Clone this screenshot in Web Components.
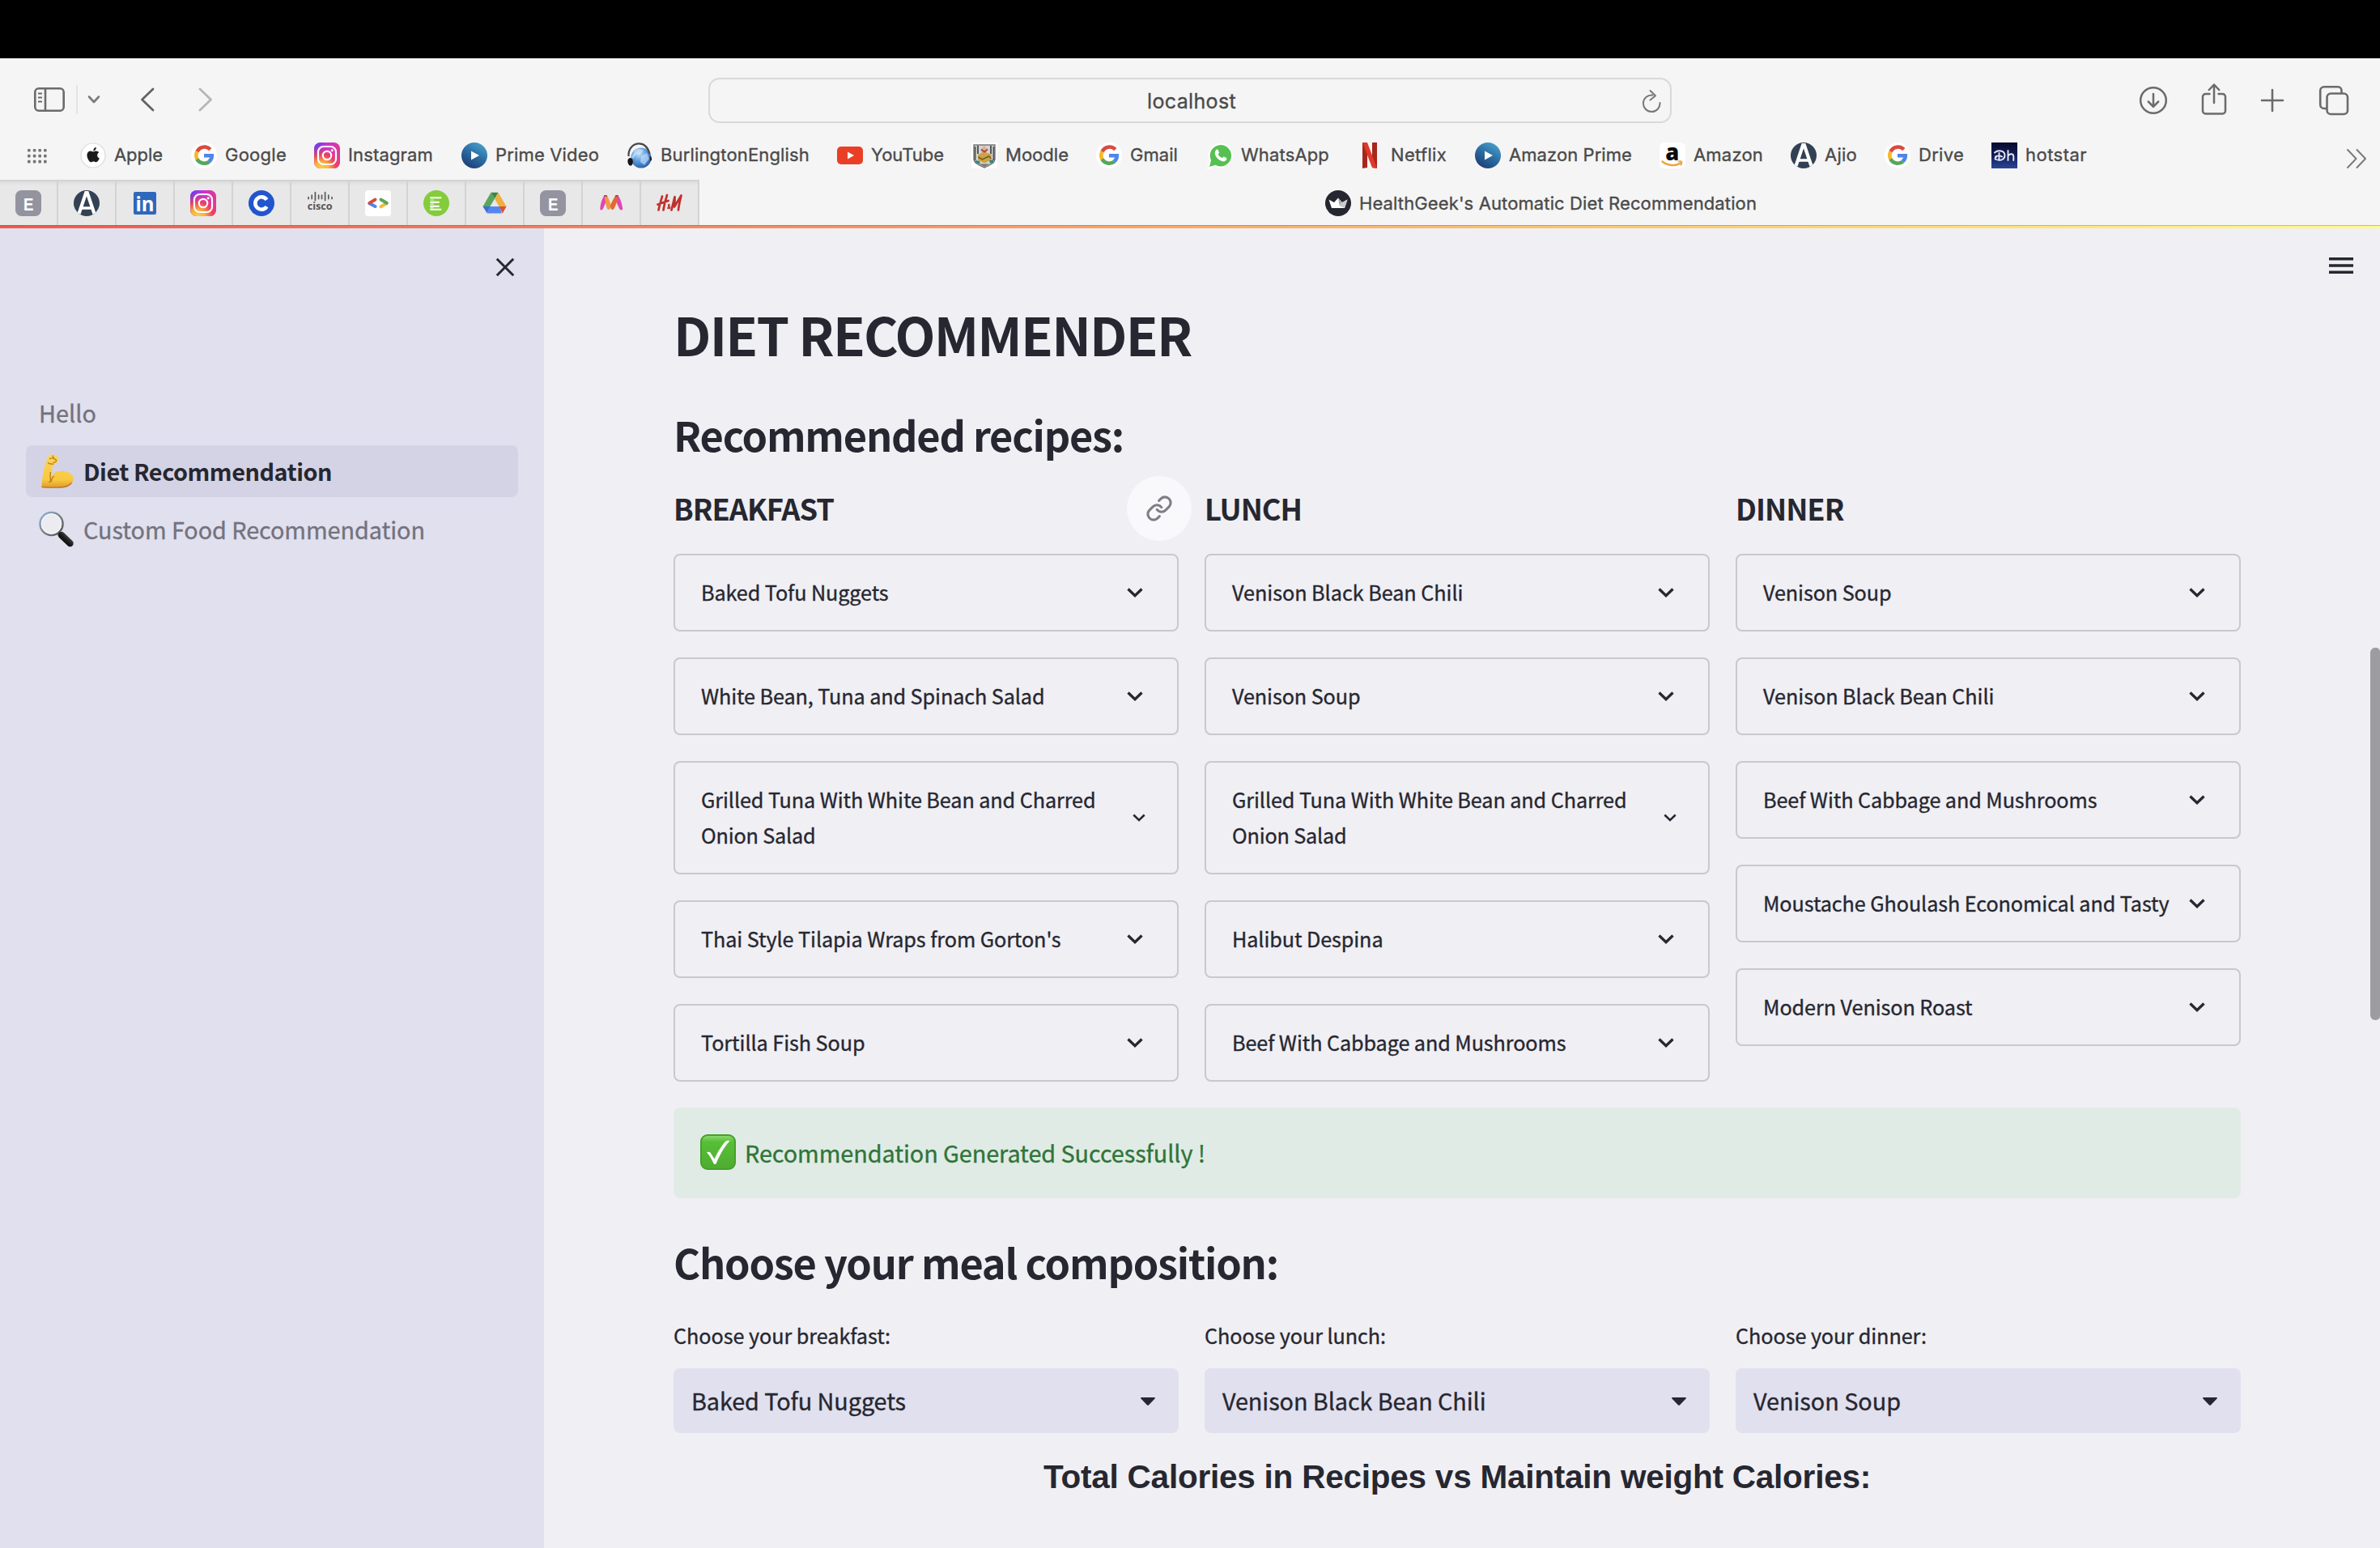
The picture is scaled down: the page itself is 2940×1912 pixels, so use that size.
<!DOCTYPE html>
<html lang="en">
<head>
<meta charset="utf-8">
<title>HealthGeek's Automatic Diet Recommendation</title>
<style>
html,body{margin:0;height:100%;overflow:hidden;background:#f0eff4}
</style>
</head>
<body>
<app-window></app-window>
<script>
const define = (name, css, html, ready) => customElements.define(name, class extends HTMLElement {
  constructor() {
    super();
    this.attachShadow({ mode: 'open' });
  }
  connectedCallback() {
    if (this.done) return;
    this.done = true;
    this.shadowRoot.innerHTML = `<style>*{box-sizing:border-box}${css}</style>` + (typeof html === 'function' ? html(this) : html);
    if (ready) ready(this);
  }
});

const googleG = '<circle cx="16" cy="16" r="16" fill="#fff"/><g fill="none" stroke-width="4.600"><path d="M23.800 8.600A10 10 0 0 0 7.500 11.400" stroke="#db4a3f"/><path d="M7.600 11.200a10 10 0 0 0 0 9.600" stroke="#f4b928"/><path d="M7.400 20.600A10 10 0 0 0 22.600 23.400" stroke="#57a65b"/><path d="M22.400 23.600A9.800 9.800 0 0 0 25.800 16.200H16" stroke="#4f86ec"/></g>';
const instagram = '<defs><linearGradient id="a" x1="0" y1="0" x2="1" y2="0"><stop offset="0" stop-color="#5b3df5"/><stop offset=".5" stop-color="#c435d6"/><stop offset="1" stop-color="#e4378f"/></linearGradient><radialGradient id="b" cx=".28" cy="1.05" r="1"><stop offset="0" stop-color="#fbd44a"/><stop offset=".3" stop-color="#f9b13e"/><stop offset=".6" stop-color="#ef4155" stop-opacity=".9"/><stop offset="1" stop-color="#d93ab0" stop-opacity="0"/></radialGradient></defs><rect width="32" height="32" rx="7.500" fill="url(#a)"/><rect width="32" height="32" rx="7.500" fill="url(#b)"/><g fill="none" stroke="#fff" stroke-width="2.200"><rect x="5" y="5" width="22" height="22" rx="6.500"/><circle cx="16" cy="16" r="5.200"/></g><circle cx="22.200" cy="9.800" r="1.500" fill="#fff"/>';
const prime = '<defs><linearGradient id="a" x1=".8" y1="0" x2=".2" y2="1"><stop offset="0" stop-color="#4aa3cf"/><stop offset=".5" stop-color="#2b6ba0"/><stop offset="1" stop-color="#1d3a72"/></linearGradient></defs><circle cx="16" cy="16" r="16" fill="url(#a)"/><path d="M12 10.400v11.200L22 16z" fill="#fff"/>';
const ajio = '<defs><clipPath id="c"><circle cx="16" cy="16" r="16"/></clipPath></defs><circle cx="16" cy="16" r="16" fill="#334155"/><g clip-path="url(#c)" fill="none" stroke="#fff"><path d="M6.500 29 15.200 3h1.600L25.500 29" stroke-width="4.200"/><path d="M8 22h16" stroke-width="3.400"/></g>';
const letterE = '<rect width="32" height="32" rx="7.500" fill="#9494a0"/><text x="16.300" y="24.600" text-anchor="middle" font-family="Liberation Sans" font-weight="700" font-size="22" textLength="12.500" lengthAdjust="spacingAndGlyphs" fill="#fff">E</text>';

const ICONS = {
  sidebar: [38,30,'<g fill="none" stroke="#6b6b6b" stroke-width="2.600"><rect x="1.300" y="1.300" width="35.400" height="27.400" rx="4.500"/><path d="M14 1v28"/><path d="M5 7.500h5M5 12.500h5M5 17.500h5" stroke-width="2"/></g>'],
  caret: [16,12,'<path d="M2 2.500 8 9l6-6.500" fill="none" stroke="#7b7b7b" stroke-width="2.600" stroke-linecap="round" stroke-linejoin="round"/>'],
  back: [18,30,'<path d="M16 2 2.500 15 16 28" fill="none" stroke="#636363" stroke-width="2.800" stroke-linecap="round" stroke-linejoin="round"/>'],
  forward: [18,30,'<path d="M2 2l13.500 13L2 28" fill="none" stroke="#b6b6b6" stroke-width="2.800" stroke-linecap="round" stroke-linejoin="round"/>'],
  reload: [26,30,'<g fill="none" stroke="#777" stroke-width="2" stroke-linecap="round" stroke-linejoin="round"><path d="M14.500 7.500a10.300 10.300 0 1 0 9 9.500"/><path d="M11.500 2l6.500 6.200-6.500 5.300"/></g>'],
  download: [36,36,'<g fill="none" stroke="#6b6b6b" stroke-width="2.500" stroke-linecap="round" stroke-linejoin="round"><circle cx="18" cy="18" r="15.800"/><path d="M18 10v15.500M11.800 19.500 18 25.800l6.200-6.300"/></g>'],
  share: [32,40,'<g fill="none" stroke="#6b6b6b" stroke-width="2.500" stroke-linecap="round" stroke-linejoin="round"><path d="M10.500 14H5.500a3.500 3.500 0 0 0-3.500 3.500V35a3.500 3.500 0 0 0 3.500 3.500h21A3.500 3.500 0 0 0 30 35V17.500a3.500 3.500 0 0 0-3.500-3.500h-5"/><path d="M16 25V3M9.800 9 16 2.500 22.200 9"/></g>'],
  plus: [30,30,'<path d="M15 2v26M2 15h26" stroke="#6b6b6b" stroke-width="2.600" stroke-linecap="round"/>'],
  windows: [38,38,'<g fill="none" stroke="#6b6b6b" stroke-width="2.600"><path d="M10.500 29H7a4.800 4.800 0 0 1-4.800-4.800V7A4.800 4.800 0 0 1 7 2.200h17A4.800 4.800 0 0 1 28.500 7v3.500"/><rect x="10.500" y="10.500" width="25.500" height="25.500" rx="4.800"/></g>'],
  more: [28,26,'<g fill="none" stroke="#7b7b7b" stroke-width="2" stroke-linecap="round" stroke-linejoin="round"><path d="M3 2l10.500 11L3 24M14.500 2 25 13 14.500 24"/></g>'],
  grid: [24,18,'<g fill="#757575">' + [0,6.8,13.4,20].map(x => [0,6.8,13.8].map(y => `<rect x="${x}" y="${y}" width="3.600" height="3.600" rx="1"/>`).join('')).join('') + '</g>'],
  apple: [32,32,'<circle cx="16" cy="16" r="15" fill="#fff" stroke="#dadada" stroke-width="1.200"/><path d="M16.300 11.300c1-.2 2-.9 3.400-.9 1.500 0 2.800.7 3.500 1.900-3 1.900-2.500 6 .7 7.300-.8 2-2.300 4.600-4 4.700-1.300 0-1.700-.8-3.300-.8s-2.100.8-3.300.8c-2.400-.1-5.600-6.300-4.700-10 .5-2.200 2.300-3.700 4.200-3.800 1.400 0 2.500.9 3.500.8zM16.200 10.300c-.1-2.400 1.700-4.300 3.700-4.600.2 2.500-1.700 4.500-3.700 4.600z" fill="#1c1c1c"/>'],
  google: [32,32,googleG], instagram: [32,32,instagram], prime: [32,32,prime], ajio: [32,32,ajio], letter: [32,32,letterE],
  burlington: [32,32,'<defs><radialGradient id="a" cx=".4" cy=".3" r=".8"><stop offset="0" stop-color="#c4e2fa"/><stop offset=".45" stop-color="#5a9ce0"/><stop offset="1" stop-color="#1f519e"/></radialGradient></defs><path d="M24 24l8 8H16z" fill="#fff"/><circle cx="18" cy="19" r="12.600" fill="url(#a)"/><path d="M10 10c4-3 9-2 11 0l-4 4-5 1-4 5-2-2zM18 17l7-4 3 7-6 8-5-4z" fill="#d2e8fa" opacity=".6"/><path d="M2.500 17C2 8 7.500 2 14.500 1.300 22 1 26.500 6 28.500 14" fill="none" stroke="#48484a" stroke-width="2.200"/><path d="M4 19c3 0 4.500 3 3.600 7-.4 2-2 3-3.500 2.500C1 27 0 20 4 19z" fill="#151517"/><path d="M28.500 17c2 0 3 2 2.500 5l-2 1z" fill="#222"/>'],
  youtube: [32,32,'<rect y="5" width="32" height="22" rx="5" fill="#ea3f26"/><path d="M13 11.400v9.200l8-4.600z" fill="#fff"/>'],
  moodle: [32,32,'<rect width="32" height="32" fill="#fff"/><path d="M3 3h26v17c0 6-7 8-13 11C10 28 3 26 3 20z" fill="#d4d4d4" stroke="#77777a" stroke-width="1.400"/><path d="M4.500 5v17M8 4v10M24 4v10M27.500 5v17" stroke="#55575c" stroke-width="2"/><path d="M12 9l3.500-5.500L19.500 8l-1 5h-6z" fill="#dfae93"/><path d="M8 15l8-3.500 9 3.500-1 7-8 3.500L8 22z" fill="#cda345"/><path d="M12 8.500l4 3 4-3" stroke="#b2413c" stroke-width="1.800" fill="none"/><path d="M8.500 18l5 3 8-4 3 3" stroke="#6d5a2a" stroke-width="1.500" fill="none"/><path d="M5 22l5 1 1 4-6-2zM22 22l5-1v4l-4 1z" fill="#3c8582"/><path d="M9 26.500h14L16 30z" fill="#77777a"/>'],
  whatsapp: [32,32,'<path d="M2 31 4.500 22.500A13.600 13.600 0 1 1 10.500 28.500z" fill="#fff" stroke="#fff" stroke-width="3"/><path d="M3 30l2-8A13.200 13.200 0 1 1 10.500 27.800z" fill="#56c152"/><path d="M11.300 9c.9-.7 2-.5 2.400.3l1.300 3c.3.800-1.300 2-1.200 2.500 1 2 2.700 3.500 4.700 4.300.7.200 1.700-1.800 2.400-1.500l3 1.500c.6.300.5 1.500 0 2.500-1 1.700-3.500 2.200-5.500 1.500-4-1.300-7-4.300-8.400-8-.7-2.300 0-4.900 1.300-6.100z" fill="#fff"/>'],
  netflix: [32,32,'<path d="M7 0h6v31l-6 1zM19 0h6v32l-6-1z" fill="#a8271d"/><path d="M7 0h6l12 32-6-1z" fill="#de3a29"/>'],
  amazon: [32,32,'<rect width="32" height="32" rx="6" fill="#fff"/><text x="15.800" y="21.500" text-anchor="middle" font-family="Open Sans" font-size="29" font-weight="800" textLength="17" lengthAdjust="spacingAndGlyphs" fill="#0b0b0b">a</text><path d="M3.500 23.500c7 5.500 16 6 22.500 2" fill="none" stroke="#eea33a" stroke-width="2.400" stroke-linecap="round"/><path d="M23.500 23.300c4-.9 5 .2 3 4.400" fill="none" stroke="#eea33a" stroke-width="1.800" stroke-linecap="round"/>'],
  hotstar: [32,32,'<defs><linearGradient id="a" x1="0" y1="0" x2="0" y2="1"><stop offset="0" stop-color="#070b2c"/><stop offset=".5" stop-color="#141d5c"/><stop offset="1" stop-color="#2a4696"/></linearGradient></defs><rect width="32" height="32" fill="url(#a)"/><g fill="none" stroke="#e6e8f2" stroke-width="1.900" stroke-linecap="round"><path d="M4 12.500C8 9 16.500 9.500 16.500 16c0 5-5 6.500-8.500 5.500M9.500 13v8M5 17.500c2-1.500 6-1.500 8 0M6 21c-2-.5-2-2 0-3M20.500 10v12M20.500 17c1.500-3.500 6.500-4 6.800 0v5"/></g>'],
  linkedin: [32,32,'<rect x="2" y="2" width="28" height="28" rx="2" fill="#2e68bd"/><text x="16" y="26" text-anchor="middle" font-family="Open Sans" font-weight="700" font-size="25" textLength="23" lengthAdjust="spacingAndGlyphs" fill="#fff">in</text>'],
  coursera: [32,32,'<circle cx="16" cy="16" r="16" fill="#2255cd"/><path d="M22.500 11.800A7.700 7.700 0 1 0 22.500 20.200" fill="none" stroke="#fff" stroke-width="4.600"/>'],
  cisco: [32,32,'<path d="M2 8.500v2M6.200 6v4.500M10.400 2.500v10M14.600 6v4.500M18.500 6v4.500M22.600 2.500v10M26.800 6v4.500M31 8.500v2" stroke="#5a5a5a" stroke-width="1.700" stroke-linecap="round"/><text x="16.200" y="24.400" text-anchor="middle" font-family="Open Sans" font-weight="700" font-size="13" textLength="31" lengthAdjust="spacingAndGlyphs" fill="#555">cisco</text>'],
  gdev: [32,32,'<rect width="32" height="32" rx="4" fill="#fff"/><g stroke-width="4" stroke-linecap="round"><path d="M5.500 16.300 12.500 20" stroke="#4f86ec"/><path d="M5.500 15.700 12.500 11.600" stroke="#d54c3f"/><path d="M19.500 20.300 26.500 16.200" stroke="#f1bb3a"/><path d="M19.500 11.600 26.800 15.800" stroke="#57a65b"/></g>'],
  edu: [32,32,'<circle cx="16" cy="16" r="16" fill="#84cc3c"/><path d="M9 9.200h12.500M9 14.800h10M9 19.800h10M9 23.800h12.500" stroke="#fff" stroke-width="1.900" stroke-linecap="round"/><path d="M9 12h3.500M9 17.200h3.500M9 21.800h3" stroke="#e8f6d6" stroke-width="1.200" stroke-linecap="round"/>'],
  drive: [32,32,'<path d="M11.500 2.700h9L16 10.500z" fill="#3a8544"/><path d="M11.500 2.700 16 10.500 6.800 26 1.500 20z" fill="#58a55b"/><path d="M20.500 2.700 30.500 20h-9L16 10.500z" fill="#efb041"/><path d="M9.500 20h12.500l3 8.500H7z" fill="#5387ee"/><path d="M1.500 20h8.500L6.700 28.500z" fill="#3f6bd6"/><path d="M21.500 20h9l-4.600 8.500z" fill="#d8503f"/>'],
  myntra: [32,32,'<path d="M5.500 23.500C3.500 25.500 2 24.500 2.300 22 3.300 14 6 6.500 9 6.500c1.500 0 2.600 1.500 3.500 4C10 12 7.500 20 5.500 23.500z" fill="#e146b2"/><path d="M26.500 23.500c2 2 4 1.200 3.500-1.500C29 14 26 6.500 23 6.500c-1.500 0-2.600 1.500-3.500 4 2.500 1.500 5 9.500 7 13z" fill="#e146b2"/><path d="M8.500 6.500c3 0 5 4.500 7.500 12.500-1 3-1.500 5-3.500 5S8.500 15 8 8z" fill="#f09a43"/><path d="M23.500 6.500c-3 0-5 4.500-8.500 12 0 3.500 1 5.500 2.500 5.500C20 24 23 16 24 8z" fill="#e5662f"/><path d="M7 7.500c1.300-1.300 2.600-1.200 4 0M21 7.500c1.300-1.300 2.600-1.200 4 0" stroke="#8d2b34" stroke-width="1.200" fill="none"/>'],
  hm: [32,32,'<g fill="none" stroke="#c1312c" stroke-width="2.700" stroke-linecap="round" stroke-linejoin="round"><path d="M7 7.500C5.500 13 3.500 19 2.500 24.500M13 6C11 12 9.500 18 8.500 24.500M1.500 17.500l13-4.500"/><path d="M18.500 24.500 22.500 8c.3 4-.2 8.500-.5 12.500L30.500 6.500C29 12.500 27.500 18 27 24.500"/><path d="M16.500 22.500c-2-2.500-2.500-4.500-1.300-5 1.500-.4 1 2-1.200 4-.5 1.500 1.500 1.500 3-1" stroke-width="1.300"/></g>'],
  crown: [32,32,'<circle cx="16" cy="16" r="16" fill="#25262f"/><path d="M4.500 11.500 11 15l5-5.500 5 5.500 6.500-3.500L24 22H8z" fill="#fff"/><path d="M27.500 11.500 21 15l-4 4 7 3z" fill="#c9c9cc"/><path d="M16 9.500l5 5.500-3.500 3.500z" fill="#a9a9ad"/>'],
  close: [26,26,'<path d="M2.800 2.800 23.200 23.200M23.200 2.800 2.800 23.200" stroke="#262730" stroke-width="3"/>'],
  menu: [30,20,'<path d="M0 1.800h30M0 10h30M0 18.200h30" stroke="#262730" stroke-width="3.400"/>'],
  arm: [44,46,'<defs><linearGradient id="a" x1="0" y1="0" x2="0" y2="1"><stop offset="0" stop-color="#fbd55f"/><stop offset=".75" stop-color="#f9c93f"/><stop offset="1" stop-color="#dd9a2c"/></linearGradient></defs><path d="M9.500 10C10 6 12.500 2.500 15.500 2l2.500 1 4 .5 2.500 4-1.500 5-4.500 1.500c-2 6-3 10.500-3 15 3-4.500 8.500-6.500 13-6.200C37 23 43 28 42.800 33 42 39.500 34 43.500 26 43.200 19 43.500 10 44 3.500 42.500 4 31 6 19 9.500 10z" fill="url(#a)"/><path d="M14.500 24c-.8 5-.9 8.500.8 11 .6-3 1.500-4.500 3.300-6M14.500 35l-2 2" fill="none" stroke="#b9761d" stroke-width="1.300"/><path d="M3.500 42.300c7 1.400 16 .9 23 .7 6-.2 11-2 14-5.500" fill="none" stroke="#bd7420" stroke-width="1.300"/><path d="M13 8c2-1.500 4-1.500 5.500-.5s2.500.5 3 2-1.500 3-4 2.500M17 3.500l1.500 4M11 12.500c2.500 1.800 5 2 7.500 1.500" fill="none" stroke="#b9761d" stroke-width="1.200"/>'],
  lens: [44,46,'<defs><linearGradient id="a" x1="0" y1="0" x2="1" y2="1"><stop offset="0" stop-color="#8fb6e2"/><stop offset=".5" stop-color="#7f868c"/><stop offset="1" stop-color="#4d5255"/></linearGradient><linearGradient id="b" x1="1" y1="0" x2="0" y2="1"><stop offset="0" stop-color="#555a5c"/><stop offset=".5" stop-color="#1b1d1e"/><stop offset="1" stop-color="#050505"/></linearGradient></defs><path d="M23 27l4 3" stroke="#8b9296" stroke-width="5"/><circle cx="15.500" cy="16" r="14" fill="#ecebf0" stroke="url(#a)" stroke-width="2.600"/><circle cx="15.500" cy="16" r="12.300" fill="none" stroke="#fff" stroke-width=".9"/><path d="M28 30 38.500 40" stroke="url(#b)" stroke-width="8.500" stroke-linecap="round"/>'],
  check: [44,44,'<defs><linearGradient id="a" x1="0" y1="0" x2="0" y2="1"><stop offset="0" stop-color="#8fdc72"/><stop offset=".2" stop-color="#57bf38"/><stop offset="1" stop-color="#4eac30"/></linearGradient></defs><rect x="1" y="1" width="42" height="42" rx="8" fill="url(#a)" stroke="#46a02c" stroke-width="2"/><path d="M8 22.500c2-1.500 4.500-.5 5.500 1.500l4 6.500C22 21 27 13 31.500 8.500c1.500-.8 3.500-.8 5-.2C29.500 15.500 24 26 19.700 36.200c-.8 1-2.400 1-3 0C14 30.500 11.500 26 8 22.500z" fill="#fff"/>'],
  link: [34,34,'<g fill="none" stroke="#7e7e84" stroke-width="2.200" stroke-linecap="round" stroke-linejoin="round" transform="scale(1.417)"><path d="M10 13a5 5 0 0 0 7.540.54l3-3a5 5 0 0 0-7.070-7.070l-1.720 1.710"/><path d="M14 11a5 5 0 0 0-7.540-.54l-3 3a5 5 0 0 0 7.070 7.070l1.710-1.710"/></g>'],
  chevron: [22,14,'<path d="M2.500 2.500 11 10.800l8.500-8.300" fill="none" stroke="#262730" stroke-width="3.300"/>'],
  chevronSmall: [18,12,'<path d="M2.300 2.500 9 9l6.700-6.500" fill="none" stroke="#262730" stroke-width="2.500"/>'],
  triangle: [18,10,'<path d="M1 0h16c1 0 1.200.8.600 1.500L10.200 9.300c-.7.700-1.700.7-2.400 0L.4 1.500C-.2.800 0 0 1 0z" fill="#262730"/>']
};

define('ui-icon', ':host{display:block;flex:none;line-height:0}svg{display:block;overflow:visible}', el => {
  const [w, h, body] = ICONS[el.getAttribute('name')];
  return `<svg width="${w}" height="${h}" viewBox="0 0 ${w} ${h}">${body}</svg>`;
});

define('app-window', `:host{display:flex;flex-direction:column;width:2940px;height:1912px;overflow:hidden;color:#262730;font-family:"Noto Sans CJK SC",sans-serif;background:#f0eff4}
.notch{height:72px;background:#000;flex:none}
.body{flex:1;display:flex;min-height:0}
.rail{flex:1;display:flex;flex-direction:column;align-items:flex-end}
ui-icon{margin:36px 33px 0 0}
.thumb{width:12px;height:460px;margin-top:462px;border-radius:6px 5px 5px 6px;background:#9d9ca0}`,
`<div class="notch"></div><browser-toolbar></browser-toolbar><bookmark-bar></bookmark-bar><tab-strip></tab-strip><div class="body"><side-nav></side-nav><diet-page></diet-page><div class="rail"><ui-icon name="menu"></ui-icon><div class="thumb"></div></div></div>`);

define('browser-toolbar', `:host{display:flex;align-items:center;height:104px;flex:none;background:#f5f5f5;font-family:Inter,sans-serif;color:#4a4a4a}
.left{width:875px;display:flex;align-items:center;padding:0 0 2px 42px}
.div{width:2px;height:36px;background:#e4e4e4;margin:0 13px 0 14px}
.bar{width:1190px;height:56px;border:2px solid #d9d9d9;border-radius:14px;display:flex;align-items:center;padding:2px 10px 0 540px;justify-content:space-between}
.right{flex:1;display:flex;align-items:center;padding-left:577px}`,
`<div class="left"><ui-icon name="sidebar"></ui-icon><div class="div"></div><ui-icon name="caret" style="margin-left:-1px"></ui-icon><ui-icon name="back" style="margin-left:49px"></ui-icon><ui-icon name="forward" style="margin-left:54px"></ui-icon></div>
<div class="bar"><fit-text w="110" size="25">localhost</fit-text><ui-icon name="reload"></ui-icon></div>
<div class="right"><ui-icon name="download"></ui-icon><ui-icon name="share" style="margin:-4px 0 0 41px"></ui-icon><ui-icon name="plus" style="margin-left:41px"></ui-icon><ui-icon name="windows" style="margin-left:42px"></ui-icon></div>`);

define('bookmark-item', `:host{display:flex;flex:none;align-items:center;gap:10px;height:32px}fit-text{margin-top:-2px}`,
  el => `<ui-icon name="${el.getAttribute('icon')}"></ui-icon><fit-text w="${el.getAttribute('w')}" size="22">${el.textContent}</fit-text>`,
  el => { el.style.width = el.getAttribute('pitch') + 'px'; });

const BOOKMARKS = [['apple','Apple',99,200],['google','Google',236,353],['instagram','Instagram',388,534],['prime','Prime Video',570,739],['burlington','BurlingtonEnglish',774,999],['youtube','YouTube',1034,1165],['moodle','Moodle',1200,1319],['google','Gmail',1354,1454],['whatsapp','WhatsApp',1491,1641],['netflix','Netflix',1676,1786],['prime','Amazon Prime',1822,2015],['amazon','Amazon',2050,2177],['ajio','Ajio',2212,2293],['google','Drive',2328,2425],['hotstar','hotstar',2460,2577]];
define('bookmark-bar', `:host{display:flex;align-items:flex-start;height:46px;flex:none;background:#f5f5f5;font-family:Inter,sans-serif;color:#4a4a4a}
.grid{width:99px;padding:8px 0 0 34px;flex:none}.more{margin:7px 15px 0 auto}`,
  () => '<div class="grid"><ui-icon name="grid"></ui-icon></div>' + BOOKMARKS.map(([icon, label, x, end], i) =>
    `<bookmark-item icon="${icon}" w="${end - x - 41}" pitch="${i + 1 < BOOKMARKS.length ? BOOKMARKS[i + 1][2] - x : 160}">${label}</bookmark-item>`).join('') + '<ui-icon class="more" name="more"></ui-icon>');

define('tab-strip', `:host{display:flex;flex-wrap:wrap;align-content:flex-start;height:60px;flex:none;background:#f5f5f5;font-family:Inter,sans-serif;color:#4a4a4a}
.pin{width:72px;height:56px;background:linear-gradient(#cfcfcf,#dedede 3px,#e8e8e8 7px);border-right:2px solid #d3d3d3;display:flex;align-items:center;justify-content:center;padding-top:2px}
.pin:first-child{justify-content:flex-start;padding-left:19px}
.active{flex:1;display:flex;align-items:center;gap:10px;padding:2px 0 0 773px;height:56px}
.line{width:100%;height:4px;background:linear-gradient(rgba(90,60,60,.3) 1px,transparent 1.500px),linear-gradient(90deg,#ee5a50,#f9b770 58%,#fffb85)}`,
  '<div class="pin"><ui-icon name="letter"></ui-icon></div>' + ['ajio','linkedin','instagram','coursera','cisco','gdev','edu','drive','letter','myntra','hm'].map(n => `<div class="pin"><ui-icon name="${n}"></ui-icon></div>`).join('') +
  `<div class="active"><ui-icon name="crown"></ui-icon><fit-text w="491" size="22">HealthGeek's Automatic Diet Recommendation</fit-text></div><div class="line"></div>`);

define('nav-item', `:host{display:flex;align-items:center;gap:11px;height:64px;border-radius:8px;padding:0 16px;color:#73737e}
:host([active]){background:#d4d3e5;color:#262730}ui-icon{margin-top:-3px}`, '<slot></slot>');

define('side-nav', `:host{display:flex;flex-direction:column;width:672px;flex:none;background:#e1e0ee;padding:35px 32px 0}
.close{align-self:flex-end;margin-right:3px}
nav{display:flex;flex-direction:column;gap:8px;margin-top:135px}`,
`<ui-icon class="close" name="close"></ui-icon><nav>
<nav-item><fit-text w="71" size="28.800">Hello</fit-text></nav-item>
<nav-item active><ui-icon name="arm"></ui-icon><fit-text w="307" size="28.800" weight="700">Diet Recommendation</fit-text></nav-item>
<nav-item><ui-icon name="lens"></ui-icon><fit-text w="422" size="28.800">Custom Food Recommendation</fit-text></nav-item></nav>`);

define('recipe-expander', `:host{display:flex;justify-content:space-between;align-items:center;border:2px solid #c9c8cf;border-radius:8px;height:96px;padding:0 41px 2px 32px}
:host([tall]){height:140px;padding-right:38px}ui-icon{margin-top:2px}`,
  el => `<div><slot></slot></div><ui-icon name="${el.hasAttribute('tall') ? 'chevronSmall' : 'chevron'}"></ui-icon>`);

define('meal-column', `:host{display:flex;flex-direction:column;width:624px}
header{height:80px;margin-bottom:16px;display:flex;align-items:center;justify-content:space-between}
.anchor{width:80px;height:80px;border-radius:50%;background:#f9f9fc;display:flex;align-items:center;justify-content:center;margin-right:-16px}
header fit-text{margin-top:-3px}
.list{display:flex;flex-direction:column;gap:32px}`,
  el => `<header><fit-text w="${el.getAttribute('w')}" size="36.300" weight="700">${el.getAttribute('heading')}</fit-text>${el.hasAttribute('linked') ? '<div class="anchor"><ui-icon name="link"></ui-icon></div>' : ''}</header><div class="list"><slot></slot></div>`);

define('meal-select', `:host{display:flex;flex-direction:column;width:624px}
.box{margin-top:19px;height:80px;border-radius:8px;background:#e1e0ee;display:flex;align-items:center;justify-content:space-between;padding:0 29px 1px 22px}ui-icon{margin-top:2px}`,
  el => `<fit-text w="${el.getAttribute('lw')}" size="25.200">${el.getAttribute('label')}</fit-text><div class="box"><fit-text w="${el.getAttribute('w')}" size="28.800">${el.textContent}</fit-text><ui-icon name="triangle"></ui-icon></div>`);

define('success-alert', `:host{display:flex;align-items:center;gap:11px;height:112px;border-radius:8px;background:#e1ebe5;padding:0 33px;color:#2f753a}ui-icon{margin-top:-2px}`, '<ui-icon name="check"></ui-icon><slot></slot>');

const line = (text, w) => `<fit-text w="${w - 1.5}" size="25.200">${text}</fit-text>`;
const one = (text, w) => `<recipe-expander>${line(text, w)}</recipe-expander>`;
const grilled = `<recipe-expander tall>${line('Grilled Tuna With White Bean and Charred', 489)}${line('Onion Salad', 143)}</recipe-expander>`;

define('diet-page', `:host{display:flex;flex-direction:column;width:1936px;margin-left:160px;flex:none}
.row{display:flex;gap:32px;align-items:flex-start}`,
`<fit-text style="margin-top:90px" w="639.500" size="65" weight="700" lh="80">DIET RECOMMENDER</fit-text>
<fit-text style="margin-top:50px" w="556" size="50.500" weight="700" lh="68">Recommended recipes:</fit-text>
<div class="row" style="margin-top:18px">
<meal-column heading="BREAKFAST" w="198" linked>${one('Baked Tofu Nuggets', 233)}${one('White Bean, Tuna and Spinach Salad', 426)}${grilled}${one("Thai Style Tilapia Wraps from Gorton's", 446)}${one('Tortilla Fish Soup', 204)}</meal-column>
<meal-column heading="LUNCH" w="120">${one('Venison Black Bean Chili', 287)}${one('Venison Soup', 160)}${grilled}${one('Halibut Despina', 188)}${one('Beef With Cabbage and Mushrooms', 414)}</meal-column>
<meal-column heading="DINNER" w="133.500">${one('Venison Soup', 160)}${one('Venison Black Bean Chili', 287)}${one('Beef With Cabbage and Mushrooms', 414)}${one('Moustache Ghoulash Economical and Tasty', 503)}${one('Modern Venison Roast', 260)}</meal-column></div>
<success-alert style="margin-top:32px"><fit-text w="569" size="28.800">Recommendation Generated Successfully !</fit-text></success-alert>
<fit-text style="margin-top:44px" w="747" size="50.500" weight="700" lh="68">Choose your meal composition:</fit-text>
<div class="row" style="margin-top:35px">
<meal-select label="Choose your breakfast:" lw="268" w="265">Baked Tofu Nuggets</meal-select>
<meal-select label="Choose your lunch:" lw="224" w="325.500">Venison Black Bean Chili</meal-select>
<meal-select label="Choose your dinner:" lw="236" w="182">Venison Soup</meal-select></div>
<fit-text style="margin:24px 0 0 457px;font-family:'Liberation Sans',sans-serif" w="1022" size="40.500" weight="700" lh="60">Total Calories in Recipes vs Maintain weight Calories:</fit-text>`);

/* A single line of text whose tracking is tuned so that it takes exactly `w` pixels. */
define('fit-text', ':host{display:block;white-space:pre;flex:none}span{display:inline-block;vertical-align:top}', '<span><slot></slot></span>', el => {
  const span = el.shadowRoot.querySelector('span');
  const lh = el.getAttribute('lh') || 44;
  const weight = el.getAttribute('weight') || 400;
  span.style.cssText = `font-size:${el.getAttribute('size')}px;font-weight:${weight};line-height:${lh}px;height:${lh}px;-webkit-text-stroke:${weight < 500 ? .35 : 0}px currentColor`;
  el.style.height = lh + 'px';
  const spare = +el.getAttribute('w') - span.getBoundingClientRect().width;
  span.style.letterSpacing = (spare / el.textContent.length).toFixed(4) + 'px';
});
</script>
</body>
</html>
